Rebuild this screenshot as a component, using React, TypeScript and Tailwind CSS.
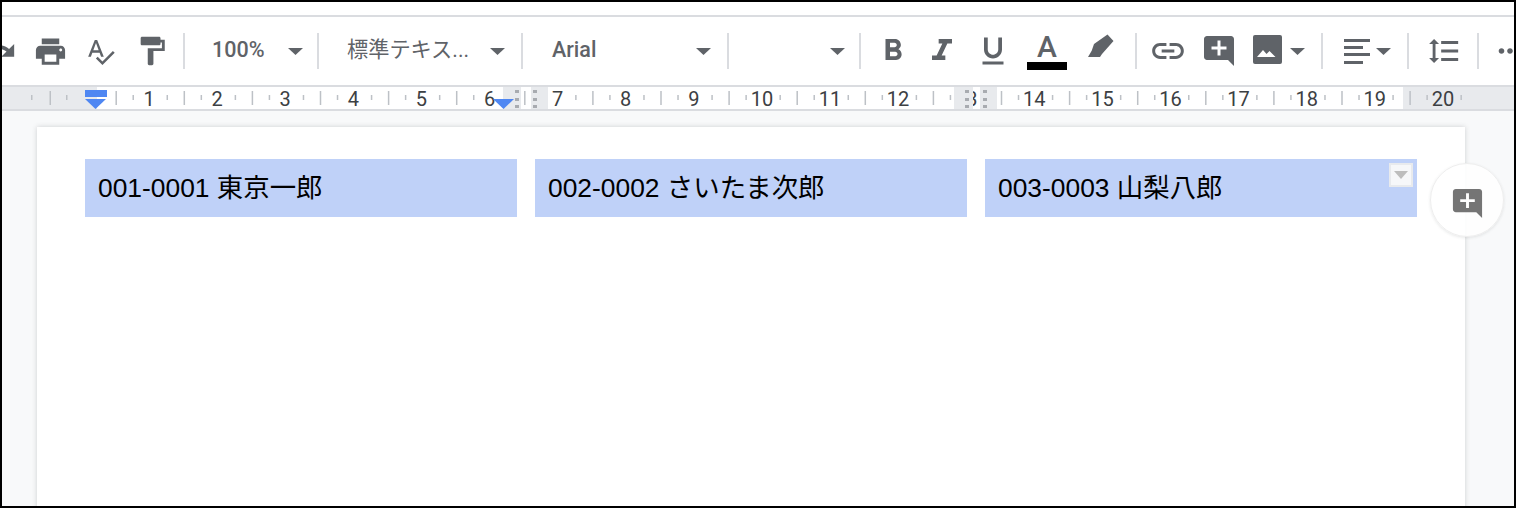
import React from "react";
import {
  MdRedo, MdPrint, MdSpellcheck, MdFormatPaint, MdFormatBold, MdFormatUnderlined,
  MdInsertLink, MdAddComment, MdFormatLineSpacing, MdMoreHoriz,
} from "react-icons/md";

const Tri = ({ className = "" }: { className?: string }) => (
  <svg width="15" height="7" viewBox="0 0 15 7" className={"shrink-0 " + className}><path d="M0 0h15L7.5 7z" fill="#5f6368" /></svg>
);
const Sep = ({ className = "" }: { className?: string }) => <div className={"h-[36px] w-[2px] shrink-0 -translate-x-px bg-[#dadce0] " + className} />;

const Highlighter = () => (
  <svg width="34" height="34" viewBox="0 0 34 34" className="ml-[16px] shrink-0">
    <path d="M24.5 0.5L30.5 7 19 20 17 23H5L8.7 16.7 11 10z" fill="#5f6368" />
  </svg>
);
const ItalicIcon = () => (
  <svg width="40" height="36" viewBox="0 0 24 24" preserveAspectRatio="none" className="ml-[11px] shrink-0">
    <path d="M10 4v3h2.21l-3.42 8H6v3h8v-3h-2.21l3.42-8H18V4z" fill="#5f6368" />
  </svg>
);
const ImageIcon = () => (
  <svg width="34" height="34" viewBox="0 0 34 34" className="ml-[13px] shrink-0">
    <rect x="3" y="1" width="29" height="29" rx="2" fill="#5f6368" />
    <path d="M7 23l6-7 3.5 4 3-3 6 6z" fill="#fff" />
  </svg>
);
const AlignIcon = () => (
  <svg width="34" height="34" viewBox="0 0 34 34" className="ml-[16px] shrink-0">
    <path d="M4 5h26v3H4zM4 12h19v3H4zM4 19h26v3H4zM4 27h19v3H4z" fill="#5f6368" />
  </svg>
);

const numbers = [1, 2, 3, 4, 5, 6, 7, 8, 9, 10, 11, 12, 13, 14, 15, 16, 17, 18, 19, 20];
const step = 68.1;
const x0 = 149;

const RulerTicks = () => {
  const ticks: React.ReactNode[] = [];
  for (let n = 1; n <= 20; n++) {
    const c = x0 + (n - 1) * step - 1.5;
    ticks.push(<rect key={"a" + n} x={c - step / 2} y="4" width="1.5" height="14" fill="#bdc1c6" />);
    ticks.push(<rect key={"b" + n} x={c - step / 4} y="8" width="1.5" height="5" fill="#bdc1c6" />);
    ticks.push(<rect key={"c" + n} x={c + step / 4} y="8" width="1.5" height="5" fill="#bdc1c6" />);
  }
  return (
    <svg className="absolute left-0 top-0" width="1512" height="22">
      <rect x="29" y="8" width="1.5" height="5" fill="#bdc1c6" />
      <rect x="47.5" y="4" width="1.5" height="14" fill="#bdc1c6" />
      <rect x="64" y="8" width="1.5" height="5" fill="#bdc1c6" />
      {ticks}
    </svg>
  );
};

const Handle = ({ left }: { left: string }) => (
  <div className={"absolute top-[3px] flex h-[18px] w-[4px] flex-col justify-between " + left}>
    <i className="block h-[3px] w-[4px] bg-[#a8abb0]" />
    <i className="block h-[3px] w-[4px] bg-[#a8abb0]" />
    <i className="block h-[3px] w-[4px] bg-[#a8abb0]" />
  </div>
);

const cells = ["001-0001 東京一郎", "002-0002 さいたま次郎", "003-0003 山梨八郎"];

export default function App() {
  return (
    <div className="relative box-border flex h-[508px] w-[1516px] flex-col overflow-hidden border-2 border-black bg-white [font-family:Roboto,'Noto_Sans_CJK_JP',sans-serif]">
      <div className="h-[13px] shrink-0" />
      <div className="h-[2px] shrink-0 bg-[#dadce0]" />
      <div className="flex h-[68px] shrink-0 items-center overflow-hidden text-[#5f6368]">
        <MdRedo size={34} className="ml-[-19px] shrink-0" />
        <MdPrint size={35} className="ml-[16px] shrink-0" />
        <MdSpellcheck size={31} className="ml-[17px] shrink-0" />
        <MdFormatPaint size={34} className="ml-[19px] shrink-0" />
        <Sep className="ml-[15px]" />
        <span className="mb-[2px] ml-[26px] w-[76px] shrink-0 text-[21.5px] font-medium">100%</span>
        <Tri />
        <Sep className="ml-[15px]" />
        <span className="mb-[2px] ml-[27px] w-[143px] shrink-0 whitespace-nowrap text-[21.2px]">標準テキス...</span>
        <Tri />
        <Sep className="ml-[17px]" />
        <span className="mb-[2px] ml-[28px] w-[144px] shrink-0 text-[21.5px] font-medium">Arial</span>
        <Tri />
        <Sep className="ml-[17px]" />
        <Tri className="ml-[100px]" />
        <Sep className="ml-[15px]" />
        <MdFormatBold size={36} className="ml-[13px] shrink-0" />
        <ItalicIcon />
        <MdFormatUnderlined size={36} className="ml-[13px] shrink-0" />
        <div className="ml-[16px] flex w-[40px] shrink-0 flex-col items-center">
          <span className="h-[29px] text-[30px] font-medium leading-[29px]">A</span>
          <div className="mt-[1px] h-[8px] w-[40px] bg-black" />
        </div>
        <Highlighter />
        <Sep className="ml-[19px]" />
        <MdInsertLink size={38} className="ml-[11px] shrink-0" />
        <MdAddComment size={36} className="ml-[14px] shrink-0" />
        <ImageIcon />
        <Tri className="ml-[6px]" />
        <Sep className="ml-[17px]" />
        <AlignIcon />
        <Tri className="ml-[2px]" />
        <Sep className="ml-[17px]" />
        <MdFormatLineSpacing size={34} className="ml-[17px] shrink-0" />
        <Sep className="ml-[17px]" />
        <MdMoreHoriz size={34} className="ml-[13px] shrink-0" />
      </div>
      <div className="h-[2px] shrink-0 bg-[#dadce0]" />
      <div className="relative h-[22px] shrink-0 bg-[#e8eaed]">
        <div className="absolute left-[95px] top-0 h-full w-[1306px] bg-white" />
        <RulerTicks />
        {numbers.map((n) => (
          <span
            key={n}
            className="absolute top-[2px] w-[40px] text-center text-[20px] leading-[20px] text-[#3c4043]"
            style={{ left: x0 + (n - 1) * step - 22 }}
          >
            {n}
          </span>
        ))}
        <div className="absolute left-[501px] top-0 h-full w-[18px] bg-[#e8eaed]" />
        <div className="absolute left-[529px] top-0 h-full w-[17px] bg-[#e8eaed]" />
        <div className="absolute left-[952px] top-0 h-full w-[19px] bg-[#e8eaed]" />
        <div className="absolute left-[978px] top-0 h-full w-[17px] bg-[#e8eaed]" />
        <Handle left="left-[513px]" />
        <Handle left="left-[531px]" />
        <Handle left="left-[963px]" />
        <Handle left="left-[981px]" />
        <div className="absolute left-[83px] top-[3px] h-[7px] w-[22px] bg-[#4f87f2]" />
        <svg className="absolute left-[83px] top-[12px]" width="21" height="10"><path d="M0 0h21L10.5 10z" fill="#4f87f2" /></svg>
        <svg className="absolute left-[491px] top-[12px]" width="21" height="10"><path d="M0 0h21L10.5 10z" fill="#4f87f2" /></svg>
      </div>
      <div className="h-[2px] shrink-0 bg-[#dadce0]" />
      <div className="relative min-h-0 flex-1 bg-[#f8f9fa] pl-[35px] pt-[16px]">
        <div className="h-[400px] w-[1428px] bg-white px-[48px] pt-[32px] shadow-[0_0_5px_rgba(60,64,67,0.22)]">
          <div className="grid grid-cols-3 gap-[18px] [font-family:'Liberation_Sans','Noto_Sans_CJK_JP',sans-serif]">
            {cells.map((c) => (
              <div key={c} className="flex h-[58px] items-center bg-[#bfd1f8] pl-[13px] pt-[2px] text-[26.4px] text-black">{c}</div>
            ))}
          </div>
        </div>
        <div className="absolute left-[1387px] top-[52px] flex h-[24px] w-[24px] items-center justify-center border-2 border-[#e8eaed] bg-[#f6f7f9]">
          <svg width="14" height="8"><path d="M0 0h14L7 8z" fill="#bdbdbd" /></svg>
        </div>
        <div className="absolute left-[1428px] top-[52px] flex h-[74px] w-[74px] items-center justify-center rounded-full border border-[#eeeeee] bg-white/90 text-[#757575] shadow-[0_1px_3px_rgba(60,64,67,0.12)]">
          <MdAddComment size={35} className="mt-[6px]" />
        </div>
      </div>
    </div>
  );
}
